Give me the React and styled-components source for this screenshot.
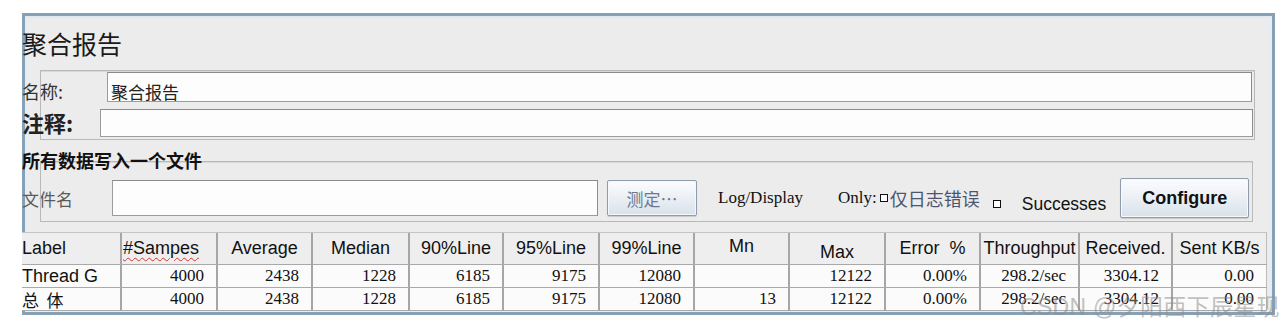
import React from 'react';
import styled, { createGlobalStyle } from 'styled-components';

const GlobalStyle = createGlobalStyle`
  html, body {
    margin: 0;
    padding: 0;
    background: #ffffff;
  }
  body {
    font-family: "Liberation Serif", "Noto Sans CJK SC", serif;
    color: #111;
  }
`;

const CJK = `"Noto Sans CJK SC", sans-serif`;
const SERIF = `"Liberation Serif", "Noto Sans CJK SC", serif`;
const SANS = `"Liberation Sans", Arial, "Noto Sans CJK SC", sans-serif`;

// Page
const Page = styled.div`
  position: relative;
  width: 1288px;
  height: 327px;
  overflow: hidden;
  padding-top: 13px;
  box-sizing: border-box;
`;

const Frame = styled.div`
  margin-left: 22px;
  width: 1253px;
  box-sizing: border-box;
  border: 3px solid #86a0b5;
  background: #ececec;
  box-shadow: inset 0 2px 0 #dfe9f4, inset 2px 0 0 #e3edf6, inset -2px 0 0 #e3edf6;
`;

const Body = styled.div`
  margin-left: -3px;
  width: 1250px;
  display: flex;
  flex-direction: column;
`;

const Title = styled.div`
  height: 52px;
  padding-top: 12px;
  box-sizing: border-box;
  font-family: ${CJK};
  font-size: 25px;
  line-height: 30px;
  color: #1a1a1a;
`;

// Name / comment group
const Group = styled.div`
  position: relative;
  margin-top: ${p => p.$top || 0}px;
  display: flex;
  flex-direction: column;

  &::before {
    content: '';
    position: absolute;
    left: 18px;
    right: ${p => p.$right || 17}px;
    top: ${p => p.$lineTop || 0}px;
    bottom: ${p => p.$lineBottom || 0}px;
    border: 1px solid #b9b9b9;
    box-shadow: inset 0 1px 0 #d8d8d8;
    pointer-events: none;
  }
`;

const FieldRow = styled.div`
  position: relative;
  display: flex;
  align-items: ${p => p.$align || 'center'};
  height: ${p => p.$h}px;
`;

const Label = styled.div`
  width: ${p => p.$w}px;
  flex: none;
  font-family: ${CJK};
  font-size: ${p => p.$size || 16}px;
  font-weight: ${p => (p.$bold ? 700 : 400)};
  color: ${p => p.$color || '#222'};
  padding-top: ${p => p.$pt || 0}px;
  line-height: 1;
`;

const TextField = styled.input`
  flex: none;
  width: ${p => p.$w}px;
  height: ${p => p.$h}px;
  margin-top: ${p => p.$mt || 0}px;
  box-sizing: border-box;
  border: 1px solid #9c9c9c;
  border-top-color: #8a8a8a;
  border-right-color: #8c8c8c;
  background: #fdfdfd;
  padding: ${p => p.$pt || 0}px 0 0 3px;
  font-family: ${CJK};
  font-size: 17px;
  color: #222;
  outline: none;
`;

// File section
const Legend = styled.div`
  position: relative;
  height: 20px;
  font-family: ${CJK};
  font-size: 18px;
  font-weight: 700;
  line-height: 20px;
  color: #111;
`;

const FileRow = styled.div`
  display: flex;
  align-items: center;
  height: 40px;
  margin-top: 8px;
  margin-bottom: 6px;
`;

const Button = styled.button`
  flex: none;
  width: ${p => p.$w}px;
  height: ${p => p.$h}px;
  margin-left: ${p => p.$ml || 0}px;
  box-sizing: border-box;
  border: 1px solid #8e9cac;
  border-radius: 2px;
  background: linear-gradient(#fbfcfe, #e9eef4 55%, #d9e1eb);
  box-shadow: inset 0 0 0 1px #f6f8fb, 0 1px 1px rgba(0, 0, 0, 0.15);
  font-family: ${p => (p.$sans ? SANS : CJK)};
  font-size: ${p => p.$size || 16}px;
  font-weight: ${p => (p.$bold ? 700 : 400)};
  color: ${p => p.$color || '#111'};
  padding: 0;
  cursor: default;
`;

const Inline = styled.span`
  flex: none;
  margin-left: ${p => p.$ml || 0}px;
  padding-top: ${p => p.$pt || 0}px;
  font-family: ${p => (p.$sans ? SANS : SERIF)};
  font-size: ${p => p.$size || 17}px;
  color: ${p => p.$color || '#111'};
  white-space: pre;
  display: inline-flex;
  align-items: center;
`;

const Box = styled.span`
  display: inline-block;
  width: 6px;
  height: 6px;
  border: 1px solid #111;
  background: #fff;
  margin: ${p => p.$m || '0'};
`;

// Table
const COLS = '100px 96px 95px 97px 94px 96px 95px 95px 96px 95px 99px 93px 94px';

const Table = styled.div`
  margin-top: 8px;
  width: 1245px;
  display: flex;
  flex-direction: column;
  border-top: 1px solid #c4c4c4;
  margin-bottom: 1px;
`;

const TRow = styled.div`
  display: grid;
  grid-template-columns: ${COLS};
  height: ${p => p.$h}px;
  background: ${p => (p.$head ? '#eeeeee' : '#fbfbfb')};
  border-bottom: 1px solid #a9a9a9;
  box-sizing: border-box;
`;

const Cell = styled.div`
  display: flex;
  align-items: center;
  justify-content: ${p => p.$justify || 'flex-end'};
  padding: ${p => p.$pad || '0 12px 0 0'};
  padding-top: ${p => Math.max(p.$dy || 0, 0)}px;
  padding-bottom: ${p => Math.max(-(p.$dy || 0), 0)}px;
  border-right: 2px solid #a6a6a6;
  box-sizing: border-box;
  overflow: hidden;
  white-space: pre;
  font-family: ${p => (p.$sans ? SANS : SERIF)};
  font-size: ${p => p.$size || 17}px;
  color: #111;

  &:last-child {
    border-right: 1px solid #bbbbbb;
  }
`;

const Squiggle = styled.span`
  text-decoration: underline wavy #d8342c;
  text-decoration-thickness: 1px;
  text-underline-offset: 3px;
`;

const Watermark = styled.div`
  position: absolute;
  left: 1020px;
  top: 288px;
  font-family: ${SANS};
  font-size: 23px;
  color: rgba(140, 140, 140, 0.55);
  white-space: nowrap;
  letter-spacing: 0.3px;
  pointer-events: none;
`;

const headers = [
  { t: 'Label', j: 'flex-start', pad: '0' },
  { t: '#Sampes', j: 'flex-start', pad: '0 0 0 1px', sq: true },
  { t: 'Average' },
  { t: 'Median' },
  { t: '90%Line' },
  { t: '95%Line' },
  { t: '99%Line' },
  { t: 'Mn', dy: -4 },
  { t: 'Max', dy: 8 },
  { t: 'Error  %' },
  { t: 'Throughput' },
  { t: 'Received.' },
  { t: 'Sent KB/s' },
];

const rows = [
  ['Thread G', '4000', '2438', '1228', '6185', '9175', '12080', '', '12122', '0.00%', '298.2/sec', '3304.12', '0.00'],
  ['总  体', '4000', '2438', '1228', '6185', '9175', '12080', '13', '12122', '0.00%', '298.2/sec', '3304.12', '0.00'],
];

const App = () => {
  return (
    <>
      <GlobalStyle />
      <Page>
        <Frame>
          <Body>
            <Title>聚合报告</Title>

            <Group $top={2}>
              <FieldRow $h={34} $align="flex-start">
                <Label $w={85} $pt={12} $size={18} $color="#333">名称:</Label>
                <TextField $w={1145} $h={30} $mt={2} $pt={9} readOnly value="聚合报告" />
              </FieldRow>
              <FieldRow $h={36}>
                <Label $w={78} $size={22} $bold>注释:</Label>
                <TextField $w={1153} $h={28} $mt={2} readOnly value="" />
              </FieldRow>
            </Group>

            <Group $top={10} $lineTop={11} $lineBottom={2} $right={19}>
              <Legend>所有数据写入一个文件</Legend>
              <FileRow>
                <Label $w={90} $size={17} $color="#5a5a5a">文件名</Label>
                <TextField $w={486} $h={36} readOnly value="" />
                <Button $w={90} $h={36} $ml={9} $size={17} $color="#6b7a8f">测定⋯</Button>
                <Inline $ml={21}>Log/Display</Inline>
                <Inline $ml={35}>
                  Only:<Box $m="0 2px 0 3px" />
                  <Label as="span" $w="auto" $size={18} $color="#4d5670">仅日志错误</Label>
                </Inline>
                <Inline $pt={12} $ml={13}><Box /></Inline>
                <Inline $ml={21} $pt={12} $sans $size={17.5}>Successes</Inline>
                <Button $w={129} $h={40} $ml={14} $sans $bold $size={18}>Configure</Button>
              </FileRow>
            </Group>

            <Table>
              <TRow $head $h={32}>
                {headers.map((h, i) => (
                  <Cell
                    key={i}
                    $sans
                    $size={18}
                    $justify={h.j || 'center'}
                    $pad={h.pad || '0'}
                    $dy={h.dy}
                  >
                    {h.sq ? <Squiggle>{h.t}</Squiggle> : h.t}
                  </Cell>
                ))}
              </TRow>
              {rows.map((r, ri) => (
                <TRow key={ri} $h={23}>
                  {r.map((v, ci) =>
                    ci === 0 ? (
                      <Cell key={ci} $sans={ri === 0} $size={18} $justify="flex-start" $pad="0">
                        {ri === 0 ? v : <Label as="span" $w="auto" $size={17} $color="#111">{v}</Label>}
                      </Cell>
                    ) : (
                      <Cell key={ci}>{v}</Cell>
                    )
                  )}
                </TRow>
              ))}
            </Table>
          </Body>
        </Frame>
        <Watermark>CSDN @夕阳西下辰星现</Watermark>
      </Page>
    </>
  );
};

export default App;
